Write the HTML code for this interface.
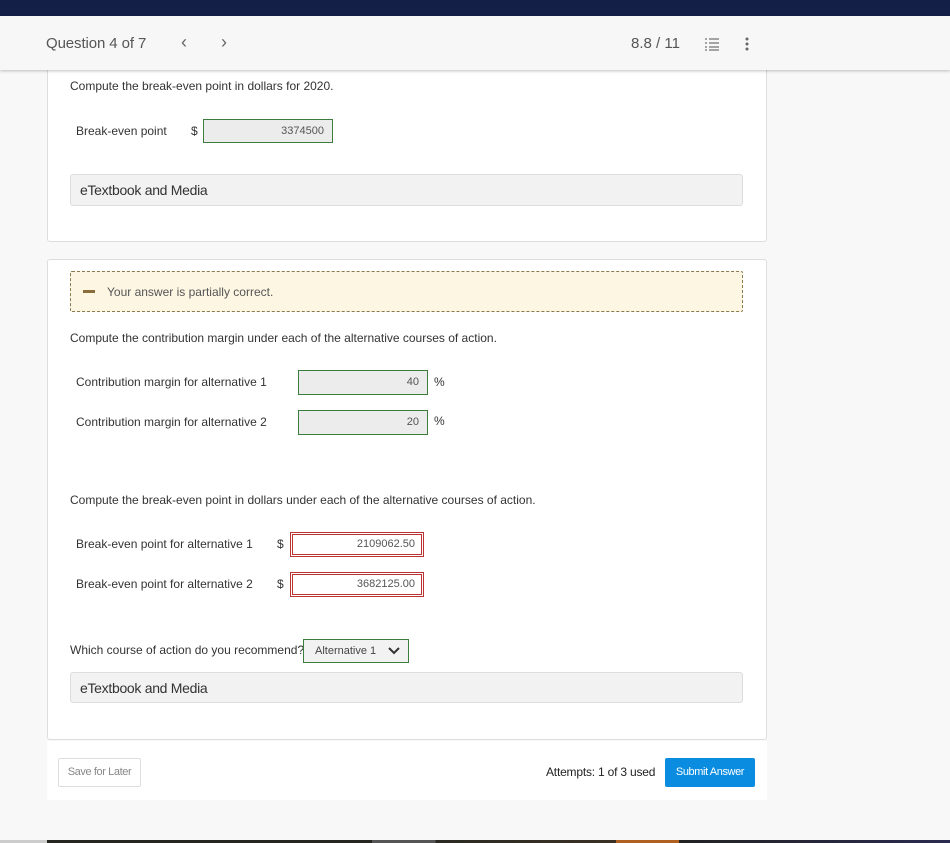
<!DOCTYPE html>
<html><head><style>
*{margin:0;padding:0;box-sizing:border-box}
body{width:950px;height:843px;background:#f8f8f8;font-family:"Liberation Sans",sans-serif;position:relative;overflow:hidden;color:#333}
.a{position:absolute}
.t{font-size:12px;color:#333;letter-spacing:0}
.card{background:#fff;border:1px solid #ddd;border-radius:3px}
.inp{background:#ececec;border:1px solid #3c7c3c;font-size:11px;text-align:right;padding-right:8px;color:#555}
.red{background:#fff;border:1px solid #b33;outline:1px solid #b33;outline-offset:-3px;font-size:11px;text-align:right;padding-right:8px;color:#555}
.etb{background:#f2f2f2;border:1px solid #ddd;border-radius:3px;font-size:14px;color:#333;padding-left:9px;line-height:30px;letter-spacing:-0.3px}
</style></head><body>
<div class="a" style="left:0;top:0;width:950px;height:16px;background:#141f47"></div>
<div class="a" style="left:0;top:16px;width:950px;height:54px;background:#f7f7f7;box-shadow:0 1px 3px rgba(0,0,0,.25);z-index:2"></div>
<div class="a" style="left:46px;top:35px;font-size:15px;color:#555;z-index:3;letter-spacing:-0.1px">Question 4 of 7</div>
<div class="a" style="left:181px;top:32px;font-size:18px;color:#666;z-index:3">&lsaquo;</div>
<div class="a" style="left:221px;top:32px;font-size:18px;color:#666;z-index:3">&rsaquo;</div>
<div class="a" style="left:631px;top:35px;font-size:15px;color:#555;z-index:3;letter-spacing:0">8.8 / 11</div>
<svg class="a" style="left:705px;top:37px;z-index:3" width="14" height="14"><g stroke="#777" stroke-width="1.3"><line x1="0" y1="2" x2="2" y2="2"/><line x1="4" y1="2" x2="14" y2="2"/><line x1="0" y1="6" x2="2" y2="6"/><line x1="4" y1="6" x2="14" y2="6"/><line x1="0" y1="10" x2="2" y2="10"/><line x1="4" y1="10" x2="14" y2="10"/><line x1="0" y1="13" x2="2" y2="13"/><line x1="4" y1="13" x2="14" y2="13"/></g></svg>
<svg class="a" style="left:745px;top:37px;z-index:3" width="4" height="14"><g fill="#666"><circle cx="2" cy="2" r="1.5"/><circle cx="2" cy="7" r="1.5"/><circle cx="2" cy="12" r="1.5"/></g></svg>

<div class="a card" style="left:47px;top:40px;width:720px;height:202px"></div>
<div class="a t" style="left:70px;top:79px">Compute the break-even point in dollars for 2020.</div>
<div class="a t" style="left:76px;top:124px">Break-even point</div>
<div class="a t" style="left:191px;top:124px">$</div>
<div class="a inp" style="left:203px;top:119px;width:130px;height:24px;line-height:22px">3374500</div>
<div class="a etb" style="left:70px;top:174px;width:673px;height:32px">eTextbook and Media</div>

<div class="a card" style="left:47px;top:259px;width:720px;height:481px"></div>
<div class="a" style="left:70px;top:271px;width:673px;height:41px;background:#fdf6e3;border:1px dashed #8a7a50;border-radius:2px"></div>
<div class="a" style="left:83px;top:290px;width:12px;height:3px;background:#8a6d3b"></div>
<div class="a t" style="left:107px;top:285px;color:#555">Your answer is partially correct.</div>
<div class="a t" style="left:70px;top:331px">Compute the contribution margin under each of the alternative courses of action.</div>
<div class="a t" style="left:76px;top:375px">Contribution margin for alternative 1</div>
<div class="a inp" style="left:298px;top:370px;width:130px;height:25px;line-height:23px">40</div>
<div class="a t" style="left:434px;top:375px">%</div>
<div class="a t" style="left:76px;top:415px">Contribution margin for alternative 2</div>
<div class="a inp" style="left:298px;top:410px;width:130px;height:25px;line-height:23px">20</div>
<div class="a t" style="left:434px;top:414px">%</div>
<div class="a t" style="left:70px;top:493px">Compute the break-even point in dollars under each of the alternative courses of action.</div>
<div class="a t" style="left:76px;top:537px">Break-even point for alternative 1</div>
<div class="a t" style="left:277px;top:537px">$</div>
<div class="a red" style="left:290px;top:532px;width:134px;height:25px;line-height:23px">2109062.50</div>
<div class="a t" style="left:76px;top:577px">Break-even point for alternative 2</div>
<div class="a t" style="left:277px;top:577px">$</div>
<div class="a red" style="left:290px;top:572px;width:134px;height:25px;line-height:23px">3682125.00</div>
<div class="a t" style="left:70px;top:643px">Which course of action do you recommend?</div>
<div class="a" style="left:303px;top:639px;width:106px;height:24px;background:#f2f2f2;border:1px solid #3c7c3c;font-size:11px;color:#444;padding-left:11px;line-height:22px">Alternative 1</div>
<svg class="a" style="left:388px;top:647px" width="12" height="8"><path d="M1 1 L6 6 L11 1" stroke="#333" stroke-width="2" fill="none"/></svg>
<div class="a etb" style="left:70px;top:672px;width:673px;height:31px">eTextbook and Media</div>

<div class="a" style="left:47px;top:741px;width:720px;height:59px;background:#fff"></div>
<div class="a" style="left:58px;top:758px;width:83px;height:29px;border:1px solid #ddd;border-radius:2px;font-size:11px;color:#888;text-align:center;line-height:27px;letter-spacing:-0.4px">Save for Later</div>
<div class="a t" style="left:546px;top:765px;color:#222;letter-spacing:-0.2px">Attempts: 1 of 3 used</div>
<div class="a" style="left:665px;top:758px;width:90px;height:29px;background:#0a8de0;border-radius:2px;font-size:11px;color:#fff;text-align:center;line-height:29px;letter-spacing:-0.4px">Submit Answer</div>

<div class="a" style="left:0;top:840px;width:47px;height:3px;background:#ccc"></div>
<div class="a" style="left:47px;top:840px;width:903px;height:3px;background:linear-gradient(90deg,#262620 0,#262620 36%,#555 36%,#555 43%,#2a2a22 43%,#3a3024 63%,#b06020 63%,#b06020 70%,#222 70%,#2a2a50 100%)"></div>
</body></html>
